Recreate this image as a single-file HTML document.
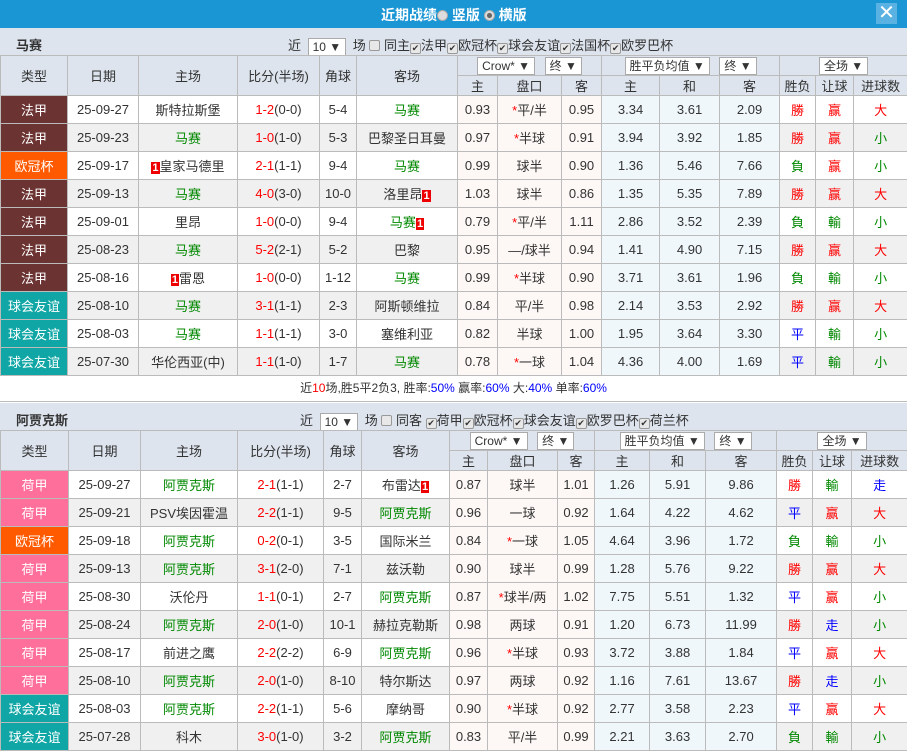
<!DOCTYPE html>
<html><head><meta charset="utf-8"><style>
*{margin:0;padding:0;box-sizing:border-box}
body{width:907px;height:752px;overflow:hidden;background:#fff;font-family:"Liberation Sans","Noto Sans CJK SC",sans-serif;font-size:13px;color:#333;position:relative}
.top{position:absolute;left:0;top:0;width:907px;height:28px;background:#1b96d4;color:#fff;font-weight:bold;font-size:14px}
.top .t{position:absolute;left:381px;top:5px}
.rad{display:inline-block;width:11px;height:11px;border-radius:50%;background:#ddd;border:1px solid #aaa;vertical-align:-1px}
.rad.on{background:radial-gradient(#666 35%,#ddd 45%)}
.x{position:absolute;right:10px;top:3px;width:21px;height:21px;background:#5ab2e2;color:#fff;font-size:20px;line-height:20px;text-align:center;font-weight:normal}
.bar{position:absolute;left:0;width:907px;height:28px;background:#dde4ee;border-bottom:1px solid #bbb}
.bar b{position:absolute;left:16px;top:7px;font-size:13px;color:#333}
.bar .f{position:absolute;top:7px;font-size:13px;white-space:nowrap}
.sel{display:inline-block;border:1px solid #aaa;background:#fff;height:18px;line-height:16px;padding:0 4px;font-size:12px;vertical-align:middle;margin:0 3px}
.cb{display:inline-block;width:11px;height:11px;border:1px solid #999;border-radius:2px;background:#e8e8e8;vertical-align:-1px;font-size:9px;line-height:9px;text-align:center;color:#333}
table{position:absolute;left:0;border-collapse:collapse;table-layout:fixed;width:907px}
td{border:1px solid #bbb;text-align:center;white-space:nowrap;overflow:hidden;height:28px;padding:0}
.h td{background:#dde4ee;height:20px}
.h .big{height:40px}
tr.e td{background:#f0f0f0}
td.o{background:#fdf8f5!important}
td.eu{background:#eff7fb!important}
td.fj{background:#6b3332!important;color:#fff}
td.og{background:#ff5a00!important;color:#fff}
td.yy{background:#11a6a6!important;color:#fff}
td.hj{background:#ff6f9c!important;color:#fff}
.g{color:#080}.r{color:#f00}.bl{color:#00f}
.n{background:#e00;color:#fff;font-size:11px;padding:0 1px;font-weight:bold}
.sum{position:absolute;left:0;top:375px;width:907px;height:27px;border-bottom:1px solid #bbb;text-align:center;line-height:27px;font-size:12px}
</style></head><body>
<div class="top"><span class="t">近期战绩<span class="rad"></span> 竖版 <span class="rad on"></span> 横版</span><div class="x">✕</div></div>

<div class="bar" style="top:28px"><b>马赛</b><span class="f" style="left:288px">近 <span class="sel">10 ▼</span> 场 <span class="cb"></span> 同主<span class="cb">✔</span>法甲<span class="cb">✔</span>欧冠杯<span class="cb">✔</span>球会友谊<span class="cb">✔</span>法国杯<span class="cb">✔</span>欧罗巴杯</span></div>

<table style="top:55px">
<colgroup><col style="width:67px"><col style="width:71px"><col style="width:99px"><col style="width:82px"><col style="width:37px"><col style="width:101px"><col style="width:40px"><col style="width:64px"><col style="width:40px"><col style="width:58px"><col style="width:60px"><col style="width:60px"><col style="width:36px"><col style="width:38px"><col style="width:54px"></colgroup>
<tr class="h"><td rowspan="2" class="big">类型</td><td rowspan="2">日期</td><td rowspan="2">主场</td><td rowspan="2">比分(半场)</td><td rowspan="2">角球</td><td rowspan="2">客场</td><td colspan="3"><span class="sel">Crow* ▼</span> <span class="sel">终 ▼</span></td><td colspan="3"><span class="sel">胜平负均值 ▼</span> <span class="sel">终 ▼</span></td><td colspan="3"><span class="sel">全场 ▼</span></td></tr>
<tr class="h"><td>主</td><td>盘口</td><td>客</td><td>主</td><td>和</td><td>客</td><td>胜负</td><td>让球</td><td>进球数</td></tr>
<tr><td class="fj">法甲</td><td>25-09-27</td><td>斯特拉斯堡</td><td><span class="r">1-2</span>(0-0)</td><td>5-4</td><td class="g">马赛</td><td class="o">0.93</td><td class="o"><span class="r">*</span>平/半</td><td class="o">0.95</td><td class="eu">3.34</td><td class="eu">3.61</td><td class="eu">2.09</td><td class="r">勝</td><td class="r">赢</td><td class="r">大</td></tr>
<tr class="e"><td class="fj">法甲</td><td>25-09-23</td><td class="g">马赛</td><td><span class="r">1-0</span>(1-0)</td><td>5-3</td><td>巴黎圣日耳曼</td><td class="o">0.97</td><td class="o"><span class="r">*</span>半球</td><td class="o">0.91</td><td class="eu">3.94</td><td class="eu">3.92</td><td class="eu">1.85</td><td class="r">勝</td><td class="r">赢</td><td class="g">小</td></tr>
<tr><td class="og">欧冠杯</td><td>25-09-17</td><td><span class="n">1</span>皇家马德里</td><td><span class="r">2-1</span>(1-1)</td><td>9-4</td><td class="g">马赛</td><td class="o">0.99</td><td class="o">球半</td><td class="o">0.90</td><td class="eu">1.36</td><td class="eu">5.46</td><td class="eu">7.66</td><td class="g">負</td><td class="r">赢</td><td class="g">小</td></tr>
<tr class="e"><td class="fj">法甲</td><td>25-09-13</td><td class="g">马赛</td><td><span class="r">4-0</span>(3-0)</td><td>10-0</td><td>洛里昂<span class="n">1</span></td><td class="o">1.03</td><td class="o">球半</td><td class="o">0.86</td><td class="eu">1.35</td><td class="eu">5.35</td><td class="eu">7.89</td><td class="r">勝</td><td class="r">赢</td><td class="r">大</td></tr>
<tr><td class="fj">法甲</td><td>25-09-01</td><td>里昂</td><td><span class="r">1-0</span>(0-0)</td><td>9-4</td><td class="g">马赛<span class="n">1</span></td><td class="o">0.79</td><td class="o"><span class="r">*</span>平/半</td><td class="o">1.11</td><td class="eu">2.86</td><td class="eu">3.52</td><td class="eu">2.39</td><td class="g">負</td><td class="g">輸</td><td class="g">小</td></tr>
<tr class="e"><td class="fj">法甲</td><td>25-08-23</td><td class="g">马赛</td><td><span class="r">5-2</span>(2-1)</td><td>5-2</td><td>巴黎</td><td class="o">0.95</td><td class="o">—/球半</td><td class="o">0.94</td><td class="eu">1.41</td><td class="eu">4.90</td><td class="eu">7.15</td><td class="r">勝</td><td class="r">赢</td><td class="r">大</td></tr>
<tr><td class="fj">法甲</td><td>25-08-16</td><td><span class="n">1</span>雷恩</td><td><span class="r">1-0</span>(0-0)</td><td>1-12</td><td class="g">马赛</td><td class="o">0.99</td><td class="o"><span class="r">*</span>半球</td><td class="o">0.90</td><td class="eu">3.71</td><td class="eu">3.61</td><td class="eu">1.96</td><td class="g">負</td><td class="g">輸</td><td class="g">小</td></tr>
<tr class="e"><td class="yy">球会友谊</td><td>25-08-10</td><td class="g">马赛</td><td><span class="r">3-1</span>(1-1)</td><td>2-3</td><td>阿斯顿维拉</td><td class="o">0.84</td><td class="o">平/半</td><td class="o">0.98</td><td class="eu">2.14</td><td class="eu">3.53</td><td class="eu">2.92</td><td class="r">勝</td><td class="r">赢</td><td class="r">大</td></tr>
<tr><td class="yy">球会友谊</td><td>25-08-03</td><td class="g">马赛</td><td><span class="r">1-1</span>(1-1)</td><td>3-0</td><td>塞维利亚</td><td class="o">0.82</td><td class="o">半球</td><td class="o">1.00</td><td class="eu">1.95</td><td class="eu">3.64</td><td class="eu">3.30</td><td class="bl">平</td><td class="g">輸</td><td class="g">小</td></tr>
<tr class="e"><td class="yy">球会友谊</td><td>25-07-30</td><td>华伦西亚(中)</td><td><span class="r">1-1</span>(1-0)</td><td>1-7</td><td class="g">马赛</td><td class="o">0.78</td><td class="o"><span class="r">*</span>一球</td><td class="o">1.04</td><td class="eu">4.36</td><td class="eu">4.00</td><td class="eu">1.69</td><td class="bl">平</td><td class="g">輸</td><td class="g">小</td></tr>
</table>

<div class="sum">近<span class="r">10</span>场,胜5平2负3, 胜率:<span class="bl">50%</span> 赢率:<span class="bl">60%</span> 大:<span class="bl">40%</span> 单率:<span class="bl">60%</span></div>

<div class="bar" style="top:403px"><b>阿贾克斯</b><span class="f" style="left:300px">近 <span class="sel">10 ▼</span> 场 <span class="cb"></span> 同客 <span class="cb">✔</span>荷甲<span class="cb">✔</span>欧冠杯<span class="cb">✔</span>球会友谊<span class="cb">✔</span>欧罗巴杯<span class="cb">✔</span>荷兰杯</span></div>

<table style="top:430px">
<colgroup><col style="width:68px"><col style="width:72px"><col style="width:97px"><col style="width:86px"><col style="width:38px"><col style="width:88px"><col style="width:38px"><col style="width:70px"><col style="width:37px"><col style="width:55px"><col style="width:56px"><col style="width:71px"><col style="width:36px"><col style="width:39px"><col style="width:56px"></colgroup>
<tr class="h"><td rowspan="2" class="big">类型</td><td rowspan="2">日期</td><td rowspan="2">主场</td><td rowspan="2">比分(半场)</td><td rowspan="2">角球</td><td rowspan="2">客场</td><td colspan="3"><span class="sel">Crow* ▼</span> <span class="sel">终 ▼</span></td><td colspan="3"><span class="sel">胜平负均值 ▼</span> <span class="sel">终 ▼</span></td><td colspan="3"><span class="sel">全场 ▼</span></td></tr>
<tr class="h"><td>主</td><td>盘口</td><td>客</td><td>主</td><td>和</td><td>客</td><td>胜负</td><td>让球</td><td>进球数</td></tr>
<tr><td class="hj">荷甲</td><td>25-09-27</td><td class="g">阿贾克斯</td><td><span class="r">2-1</span>(1-1)</td><td>2-7</td><td>布雷达<span class="n">1</span></td><td class="o">0.87</td><td class="o">球半</td><td class="o">1.01</td><td class="eu">1.26</td><td class="eu">5.91</td><td class="eu">9.86</td><td class="r">勝</td><td class="g">輸</td><td class="bl">走</td></tr>
<tr class="e"><td class="hj">荷甲</td><td>25-09-21</td><td>PSV埃因霍温</td><td><span class="r">2-2</span>(1-1)</td><td>9-5</td><td class="g">阿贾克斯</td><td class="o">0.96</td><td class="o">一球</td><td class="o">0.92</td><td class="eu">1.64</td><td class="eu">4.22</td><td class="eu">4.62</td><td class="bl">平</td><td class="r">赢</td><td class="r">大</td></tr>
<tr><td class="og">欧冠杯</td><td>25-09-18</td><td class="g">阿贾克斯</td><td><span class="r">0-2</span>(0-1)</td><td>3-5</td><td>国际米兰</td><td class="o">0.84</td><td class="o"><span class="r">*</span>一球</td><td class="o">1.05</td><td class="eu">4.64</td><td class="eu">3.96</td><td class="eu">1.72</td><td class="g">負</td><td class="g">輸</td><td class="g">小</td></tr>
<tr class="e"><td class="hj">荷甲</td><td>25-09-13</td><td class="g">阿贾克斯</td><td><span class="r">3-1</span>(2-0)</td><td>7-1</td><td>兹沃勒</td><td class="o">0.90</td><td class="o">球半</td><td class="o">0.99</td><td class="eu">1.28</td><td class="eu">5.76</td><td class="eu">9.22</td><td class="r">勝</td><td class="r">赢</td><td class="r">大</td></tr>
<tr><td class="hj">荷甲</td><td>25-08-30</td><td>沃伦丹</td><td><span class="r">1-1</span>(0-1)</td><td>2-7</td><td class="g">阿贾克斯</td><td class="o">0.87</td><td class="o"><span class="r">*</span>球半/两</td><td class="o">1.02</td><td class="eu">7.75</td><td class="eu">5.51</td><td class="eu">1.32</td><td class="bl">平</td><td class="r">赢</td><td class="g">小</td></tr>
<tr class="e"><td class="hj">荷甲</td><td>25-08-24</td><td class="g">阿贾克斯</td><td><span class="r">2-0</span>(1-0)</td><td>10-1</td><td>赫拉克勒斯</td><td class="o">0.98</td><td class="o">两球</td><td class="o">0.91</td><td class="eu">1.20</td><td class="eu">6.73</td><td class="eu">11.99</td><td class="r">勝</td><td class="bl">走</td><td class="g">小</td></tr>
<tr><td class="hj">荷甲</td><td>25-08-17</td><td>前进之鹰</td><td><span class="r">2-2</span>(2-2)</td><td>6-9</td><td class="g">阿贾克斯</td><td class="o">0.96</td><td class="o"><span class="r">*</span>半球</td><td class="o">0.93</td><td class="eu">3.72</td><td class="eu">3.88</td><td class="eu">1.84</td><td class="bl">平</td><td class="r">赢</td><td class="r">大</td></tr>
<tr class="e"><td class="hj">荷甲</td><td>25-08-10</td><td class="g">阿贾克斯</td><td><span class="r">2-0</span>(1-0)</td><td>8-10</td><td>特尔斯达</td><td class="o">0.97</td><td class="o">两球</td><td class="o">0.92</td><td class="eu">1.16</td><td class="eu">7.61</td><td class="eu">13.67</td><td class="r">勝</td><td class="bl">走</td><td class="g">小</td></tr>
<tr><td class="yy">球会友谊</td><td>25-08-03</td><td class="g">阿贾克斯</td><td><span class="r">2-2</span>(1-1)</td><td>5-6</td><td>摩纳哥</td><td class="o">0.90</td><td class="o"><span class="r">*</span>半球</td><td class="o">0.92</td><td class="eu">2.77</td><td class="eu">3.58</td><td class="eu">2.23</td><td class="bl">平</td><td class="r">赢</td><td class="r">大</td></tr>
<tr class="e"><td class="yy">球会友谊</td><td>25-07-28</td><td>科木</td><td><span class="r">3-0</span>(1-0)</td><td>3-2</td><td class="g">阿贾克斯</td><td class="o">0.83</td><td class="o">平/半</td><td class="o">0.99</td><td class="eu">2.21</td><td class="eu">3.63</td><td class="eu">2.70</td><td class="g">負</td><td class="g">輸</td><td class="g">小</td></tr>
</table>
</body></html>
